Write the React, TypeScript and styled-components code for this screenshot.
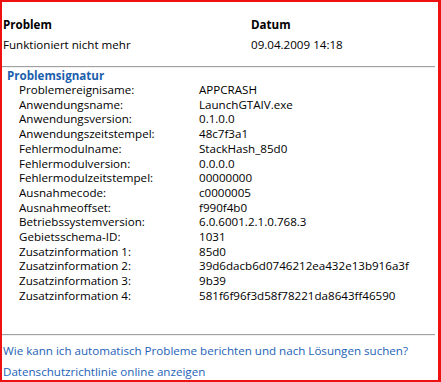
import React from "react";
import styled, { createGlobalStyle } from "styled-components";

const Global = createGlobalStyle`
  html, body { margin: 0; padding: 0; background: #fff; }
  body { font-family: "Open Sans", "Noto Sans", sans-serif; font-size: 11.6px; color: #000; }
`;

const Frame = styled.div`
  box-sizing: border-box;
  width: 441px;
  height: 382px;
  border-style: solid;
  border-color: #ee1111;
  border-width: 2px 3px 2px 2px;
  background: #fff;
  display: flex;
  flex-direction: column;
  overflow: hidden;
`;

const Header = styled.div`
  display: grid;
  grid-template-columns: 248px 1fr;
  padding: 14px 0 0 1px;
  row-gap: 3px;
  line-height: 17px;
  height: 64px;
  box-sizing: border-box;
  align-content: start;
`;

const HeadCell = styled.div<{ $bold?: boolean }>`
  font-weight: ${(p) => (p.$bold ? 700 : 400)};
  white-space: nowrap;
`;

const Rule = styled.div`
  height: 1px;
  background: #a0a0a0;
  margin-right: 3px;
  border-bottom: 1px solid #f0f0f0;
`;

const Details = styled.div`
  flex: 1;
  padding: 0 0 0 5px;
`;

const SectionTitle = styled.div`
  color: #1b5fae;
  font-weight: 700;
  line-height: 14px;
  margin-top: 1px;
`;

const Table = styled.div`
  display: grid;
  grid-template-columns: 180px 1fr;
  padding-left: 12px;
  line-height: 14.7px;
`;

const Cell = styled.div`
  white-space: nowrap;
`;

const Links = styled.div`
  display: flex;
  flex-direction: column;
  padding: 6px 0 0 1px;
  gap: 4px;
`;

const Link = styled.a`
  color: #1e62b6;
  text-decoration: none;
  line-height: 17px;
  white-space: nowrap;
`;

const rows: [string, string][] = [
  ["Problemereignisame:", "APPCRASH"],
  ["Anwendungsname:", "LaunchGTAIV.exe"],
  ["Anwendungsversion:", "0.1.0.0"],
  ["Anwendungszeitstempel:", "48c7f3a1"],
  ["Fehlermodulname:", "StackHash_85d0"],
  ["Fehlermodulversion:", "0.0.0.0"],
  ["Fehlermodulzeitstempel:", "00000000"],
  ["Ausnahmecode:", "c0000005"],
  ["Ausnahmeoffset:", "f990f4b0"],
  ["Betriebssystemversion:", "6.0.6001.2.1.0.768.3"],
  ["Gebietsschema-ID:", "1031"],
  ["Zusatzinformation 1:", "85d0"],
  ["Zusatzinformation 2:", "39d6dacb6d0746212ea432e13b916a3f"],
  ["Zusatzinformation 3:", "9b39"],
  ["Zusatzinformation 4:", "581f6f96f3d58f78221da8643ff46590"],
];

export default function App() {
  return (
    <>
      <Global />
      <Frame>
        <Header>
          <HeadCell $bold>Problem</HeadCell>
          <HeadCell $bold>Datum</HeadCell>
          <HeadCell>Funktioniert nicht mehr</HeadCell>
          <HeadCell>09.04.2009 14:18</HeadCell>
        </Header>
        <Rule />
        <Details>
          <SectionTitle>Problemsignatur</SectionTitle>
          <Table>
            {rows.map(([k, v]) => (
              <React.Fragment key={k}>
                <Cell>{k}</Cell>
                <Cell>{v}</Cell>
              </React.Fragment>
            ))}
          </Table>
        </Details>
        <Rule />
        <Links>
          <Link href="#">Wie kann ich automatisch Probleme berichten und nach Lösungen suchen?</Link>
          <Link href="#">Datenschutzrichtlinie online anzeigen</Link>
        </Links>
      </Frame>
    </>
  );
}
